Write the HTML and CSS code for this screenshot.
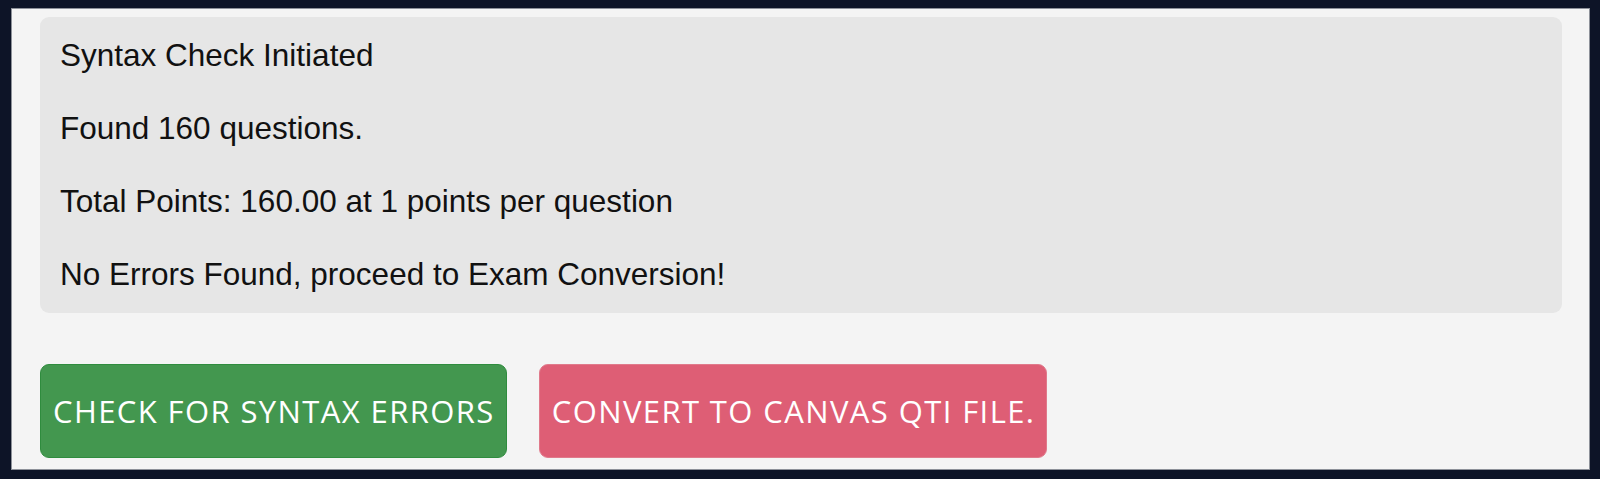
FILE: index.html
```html
<!DOCTYPE html>
<html lang="en">
<head>
    <meta charset="UTF-8">
    <meta name="viewport" content="width=device-width, initial-scale=1.0">
    <title>Exam Converter</title>
    <link rel="stylesheet" href="styles.css">
</head>
<body>
    <div class="panel">
        <div class="output" id="output">
            <p>Syntax Check Initiated</p>
            <p>Found 160 questions.</p>
            <p>Total Points: 160.00 at 1 points per question</p>
            <p>No Errors Found, proceed to Exam Conversion!</p>
        </div>

        <div class="actions">
            <button class="btn check">Check for syntax errors</button>
            <button class="btn convert">Convert to Canvas QTI file.</button>
        </div>
    </div>
</body>
</html>
```

FILE: styles.css
```css
html,
body {
    height: 100%;
}

body {
    margin: 0;
    padding: 8px 10px 9px 11px;
    box-sizing: border-box;
    background: #0d1427;
    font-family: "Liberation Sans", Arial, sans-serif;
}

.panel {
    background: #f4f4f4;
    border: 1px solid #8d9199;
    padding: 8px 27px 12px 28px;
    height: 100%;
    box-sizing: border-box;
}

/* Resultados del chequeo */
.output {
    background: #e6e6e6;
    border-radius: 9px;
    padding: 17px 20px 18px;
    color: #111;
    font-size: 31.5px;
    line-height: 42px;
}

.output p {
    margin: 31px 0;
}

.output p:first-child {
    margin-top: 0;
}

.output p:last-child {
    margin-bottom: 0;
}

/* Botones */
.actions {
    display: flex;
    gap: 32px;
    margin-top: 51px;
}

.btn {
    font-family: "Open Sans", sans-serif;
    font-size: 31px;
    line-height: 42px;
    letter-spacing: 1.4px;
    text-transform: uppercase;
    color: #fff;
    padding: 25px 11px 25px 12px;
    border-radius: 9px;
    cursor: pointer;
}

.btn.check {
    background: #43974f;
    border: 1px solid #2f8c3e;
}

.btn.convert {
    background: #de5e75;
    border: 1px solid #e07a8b;
}
```
